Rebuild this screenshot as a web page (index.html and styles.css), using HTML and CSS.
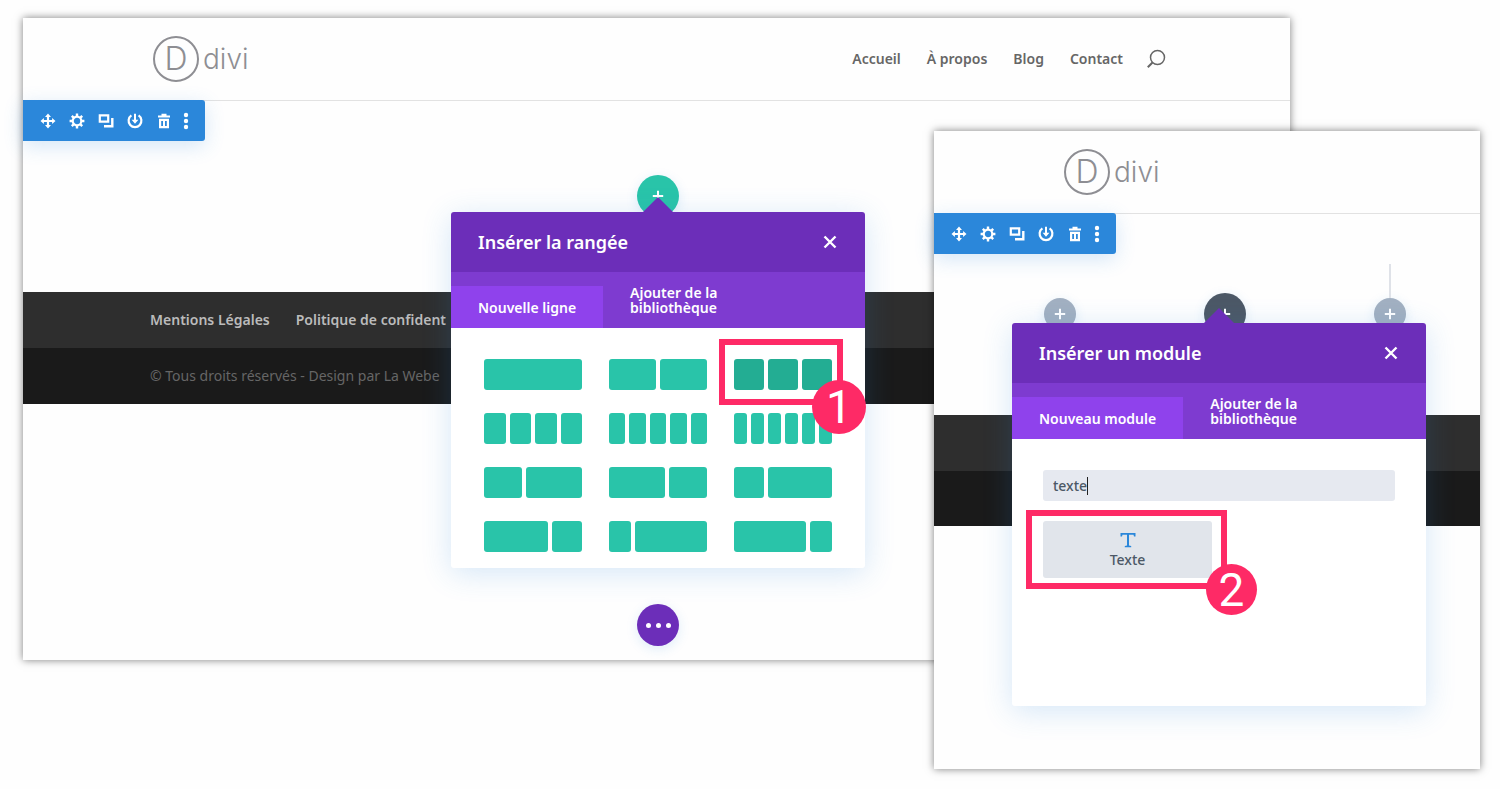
FILE: index.html
```
<!DOCTYPE html>
<html lang="fr">
<head>
<meta charset="utf-8">
<title>Divi – Insérer une rangée et un module</title>
<link rel="stylesheet" href="styles.css">
</head>
<body>
<svg class="sprite" aria-hidden="true">
  <symbol id="i-move" viewBox="0 0 16 16"><path d="M8 .5l3 3.400H9.100v3h3V5L15.500 8l-3.400 3V9.100h-3v3H11L8 15.500l-3-3.400h1.900v-3h-3V11L.5 8l3.400-3v1.900h3v-3H5z" fill="currentColor"/></symbol>
  <symbol id="i-gear" viewBox="0 0 16 16"><circle cx="8" cy="8" r="4.300" fill="none" stroke="currentColor" stroke-width="2.200"/><path d="M8 .6v3M8 12.400v3M.6 8h3M12.400 8h3M2.800 2.800l2 2M11.200 11.200l2 2M2.800 13.200l2-2M11.200 4.800l2-2" stroke="currentColor" stroke-width="2.400" fill="none"/></symbol>
  <symbol id="i-copy" viewBox="0 0 16 16"><path d="M1.800 2.300h8.400v6.400H1.800z" fill="none" stroke="currentColor" stroke-width="2.200"/><path d="M14.300 5v8.300H6" fill="none" stroke="currentColor" stroke-width="2.400"/></symbol>
  <symbol id="i-power" viewBox="0 0 16 16"><path d="M4.400 2.400a6.400 6.400 0 1 0 7.200 0" fill="none" stroke="currentColor" stroke-width="2.200"/><path d="M7 .8h2v6h2.400L8 10.800 4.600 6.800H7z" fill="currentColor"/></symbol>
  <symbol id="i-trash" viewBox="0 0 16 16"><path d="M5.500 .8h5v1.700H14v2H2v-2h3.500zM3 5.800h10v9.400H3zM5.200 8v5h1.800V8zM9 8v5h1.800V8z" fill="currentColor" fill-rule="evenodd"/></symbol>
  <symbol id="i-more" viewBox="0 0 6 18"><circle cx="3" cy="3" r="2.200" fill="currentColor"/><circle cx="3" cy="9" r="2.200" fill="currentColor"/><circle cx="3" cy="15" r="2.200" fill="currentColor"/></symbol>
  <symbol id="i-plus" viewBox="0 0 12 12"><path d="M6 .8v10.400M.8 6h10.400" stroke="currentColor" stroke-width="2" fill="none"/></symbol>
  <symbol id="i-close" viewBox="0 0 14 14"><path d="M1.500 1.500l11 11M12.500 1.500l-11 11" stroke="currentColor" stroke-width="2.400" fill="none"/></symbol>
  <symbol id="i-search" viewBox="0 0 20 20"><circle cx="11.500" cy="8.500" r="7" fill="none" stroke="currentColor" stroke-width="1.500"/><path d="M6.500 13.500L1.800 18.200" stroke="currentColor" stroke-width="2" fill="none"/></symbol>
  <symbol id="i-text" viewBox="0 0 16 16"><path d="M.5 1h15v3.500h-1.500L13.500 2.800H9v10.700l2.200.6v1.100H4.800v-1.100l2.200-.6V2.800H2.500L2 4.500H.5z" fill="currentColor"/></symbol>
</svg>

<main class="stage">
  <section class="window window-row">
    <header class="site-header">
      <a class="logo" href="#"><span class="logo-mark">D</span><span class="logo-name">divi</span></a>
      <nav class="site-nav">
        <a href="#">Accueil</a>
        <a href="#">À propos</a>
        <a href="#">Blog</a>
        <a href="#">Contact</a>
        <button class="search" aria-label="Rechercher"><svg><use href="#i-search"/></svg></button>
      </nav>
    </header>
    <div class="toolbar">
      <button aria-label="Déplacer"><svg><use href="#i-move"/></svg></button>
      <button aria-label="Réglages"><svg><use href="#i-gear"/></svg></button>
      <button aria-label="Dupliquer"><svg><use href="#i-copy"/></svg></button>
      <button aria-label="Enregistrer"><svg><use href="#i-power"/></svg></button>
      <button aria-label="Supprimer"><svg><use href="#i-trash"/></svg></button>
      <button class="more" aria-label="Plus"><svg><use href="#i-more"/></svg></button>
    </div>
    <div class="add-row">
      <button class="round green" aria-label="Ajouter une rangée"><svg><use href="#i-plus"/></svg></button>
    </div>
    <footer>
      <div class="foot-nav"><a href="#">Mentions Légales</a><a href="#">Politique de confident</a></div>
      <div class="foot-info">© Tous droits réservés - Design par La Webe</div>
    </footer>
    <div class="page-actions">
      <button class="round purple" aria-label="Options de la page"><i></i><i></i><i></i></button>
    </div>

    <div class="modal">
      <div class="modal-head"><h2>Insérer la rangée</h2><button aria-label="Fermer"><svg><use href="#i-close"/></svg></button></div>
      <div class="tabs">
        <button class="tab active">Nouvelle ligne</button>
        <button class="tab">Ajouter de la<br>bibliothèque</button>
      </div>
      <div class="layouts">
        <button class="layout" aria-label="1 colonne"><i></i></button>
        <button class="layout" aria-label="2 colonnes"><i></i><i></i></button>
        <button class="layout chosen" aria-label="3 colonnes"><i></i><i></i><i></i></button>
        <button class="layout" aria-label="4 colonnes"><i></i><i></i><i></i><i></i></button>
        <button class="layout" aria-label="5 colonnes"><i></i><i></i><i></i><i></i><i></i></button>
        <button class="layout" aria-label="6 colonnes"><i></i><i></i><i></i><i></i><i></i><i></i></button>
        <button class="layout two-three" aria-label="2/5 et 3/5"><i></i><i></i></button>
        <button class="layout three-two" aria-label="3/5 et 2/5"><i></i><i></i></button>
        <button class="layout one-two" aria-label="1/3 et 2/3"><i></i><i></i></button>
        <button class="layout two-one" aria-label="2/3 et 1/3"><i></i><i></i></button>
        <button class="layout one-three" aria-label="1/4 et 3/4"><i></i><i></i></button>
        <button class="layout three-one" aria-label="3/4 et 1/4"><i></i><i></i></button>
      </div>
      <div class="marker marker-one"><span class="step">1</span></div>
    </div>
  </section>

  <section class="window window-module">
    <header class="site-header">
      <a class="logo" href="#"><span class="logo-mark">D</span><span class="logo-name">divi</span></a>
    </header>
    <div class="toolbar">
      <button aria-label="Déplacer"><svg><use href="#i-move"/></svg></button>
      <button aria-label="Réglages"><svg><use href="#i-gear"/></svg></button>
      <button aria-label="Dupliquer"><svg><use href="#i-copy"/></svg></button>
      <button aria-label="Enregistrer"><svg><use href="#i-power"/></svg></button>
      <button aria-label="Supprimer"><svg><use href="#i-trash"/></svg></button>
      <button class="more" aria-label="Plus"><svg><use href="#i-more"/></svg></button>
    </div>
    <div class="add-modules">
      <button class="round small" aria-label="Ajouter un module, colonne 1"><svg><use href="#i-plus"/></svg></button>
      <button class="round dark" aria-label="Ajouter un module, colonne 2"><svg><use href="#i-plus"/></svg></button>
      <button class="round small linked" aria-label="Ajouter un module, colonne 3"><svg><use href="#i-plus"/></svg></button>
    </div>
    <footer>
      <div class="foot-nav"></div>
      <div class="foot-info"></div>
    </footer>

    <div class="modal">
      <div class="modal-head"><h2>Insérer un module</h2><button aria-label="Fermer"><svg><use href="#i-close"/></svg></button></div>
      <div class="tabs">
        <button class="tab active">Nouveau module</button>
        <button class="tab">Ajouter de la<br>bibliothèque</button>
      </div>
      <div class="modules">
        <div class="field"><input type="text" value="texte" size="5" aria-label="Rechercher un module"><span class="caret"></span></div>
        <button class="module"><svg><use href="#i-text"/></svg>Texte</button>
      </div>
      <div class="marker marker-two"><span class="step">2</span></div>
    </div>
  </section>
</main>
</body>
</html>
```

FILE: styles.css
```
* { box-sizing: border-box; }
body {
  margin: 0;
  background: #fefefe;
  font: 600 14px/20px "Noto Sans", "Open Sans", sans-serif;
  color: #666;
}
a { color: inherit; text-decoration: none; }
button { margin: 0; padding: 0; border: 0; background: none; font: inherit; color: inherit; }
svg { display: block; }
.sprite { position: absolute; width: 0; height: 0; }

.stage { position: relative; padding: 18px 210px 20px 23px; min-height: 100vh; }
.window { position: relative; background: #fefefe; box-shadow: 0 0 8px rgba(0, 0, 0, .5); }
.window-module { position: absolute; top: 131px; right: 20px; width: 546px; padding-bottom: 243px; }

.site-header {
  display: flex;
  align-items: center;
  justify-content: space-between;
  height: 83px;
  padding: 0 124px 0 130px;
  border-bottom: 1px solid #e2e2e2;
}
.logo { display: flex; align-items: center; gap: 4px; color: #8e8e93; font-family: Inter, sans-serif; font-weight: 300; }
.logo-mark {
  display: grid;
  place-items: center;
  width: 46px;
  height: 46px;
  border: 2px solid #8e8e93;
  border-radius: 50%;
  font-size: 32px;
  line-height: 40px;
}
.logo-name { font-size: 28px; line-height: 40px; }
.site-nav { display: flex; align-items: center; gap: 26px; }
.search { margin-left: -3px; }
.search svg { width: 20px; height: 20px; }

.toolbar {
  position: relative;
  display: flex;
  align-items: center;
  gap: 13px;
  width: max-content;
  height: 41px;
  margin-top: -1px;
  padding: 0 16px 0 17px;
  border-radius: 0 3px 3px 0;
  background: #2b87da;
  box-shadow: 0 5px 20px rgba(43, 135, 218, .2);
  color: #fff;
}
.toolbar svg { width: 16px; height: 16px; }
.toolbar .more { margin-left: -2px; }
.toolbar .more svg { width: 6px; height: 18px; }

.round {
  display: flex;
  align-items: center;
  justify-content: center;
  gap: 5px;
  width: 42px;
  height: 42px;
  border-radius: 50%;
  color: #fff;
  box-shadow: 0 3px 12px rgba(43, 135, 218, .15);
}
.round svg { width: 12px; height: 12px; }
.round i { width: 5px; height: 5px; border-radius: 50%; background: #fff; }
.green { background: #29c4a9; }
.purple { background: #6c2eb9; }
.dark { background: #4c5866; }
.small { position: relative; width: 32px; height: 32px; background: #a2b0c1; }
.linked::before { content: ""; position: absolute; bottom: 32px; left: 15px; width: 2px; height: 34px; background: #dfe2e8; }

.add-row { display: flex; justify-content: center; padding: 34px 0 75px 3px; }
.add-modules { display: flex; align-items: center; justify-content: space-between; padding: 39px 74px 80px 110px; }
.page-actions { display: flex; justify-content: center; padding: 200px 0 14px 3px; }

.foot-nav { display: flex; align-items: center; gap: 26px; height: 56px; padding: 0 127px; background: #2e2e2e; color: #bbb; }
.foot-info { display: flex; align-items: center; height: 56px; padding: 0 127px; background: #1a1a1a; color: #666; font-weight: 400; }
.window-module .foot-info { height: 55px; }

.modal {
  position: absolute;
  width: 414px;
  border-radius: 3px;
  background: #fff;
  box-shadow: 0 5px 30px rgba(43, 135, 218, .2);
  color: #fff;
}
.window-row .modal { top: 194px; left: 428px; }
.window-module .modal { top: 192px; left: 78px; }
.modal::before {
  content: "";
  position: absolute;
  bottom: 100%;
  left: 192px;
  border: 15px solid transparent;
  border-top: 0;
  border-bottom-color: #6c2eb9;
}
.modal-head {
  display: flex;
  align-items: center;
  justify-content: space-between;
  height: 60px;
  padding: 0 28px 0 27px;
  border-radius: 3px 3px 0 0;
  background: #6c2eb9;
}
.modal-head h2 { margin: 0; font-size: 18px; line-height: 24px; font-weight: 600; }
.modal-head svg { width: 14px; height: 14px; }
.tabs { display: flex; align-items: flex-end; height: 56px; background: #7e3bd0; }
.tab { height: 42px; padding: 0 27px; line-height: 15px; text-align: left; }
.tab:not(.active) { height: 56px; }
.active { background: #8f42ec; }

.layouts { display: grid; grid-template-columns: repeat(3, 1fr); gap: 23px 27px; padding: 31px 33px 16px; }
.layout { display: grid; grid-auto-flow: column; grid-auto-columns: 1fr; gap: 4px; height: 31px; }
.layout i { height: 31px; border-radius: 3px; background: #29c4a9; }
.chosen i { background: #23ad93; }
.two-three { grid-template-columns: 2fr 3fr; }
.three-two { grid-template-columns: 3fr 2fr; }
.one-two { grid-template-columns: 8fr 17fr; }
.two-one { grid-template-columns: 17fr 8fr; }
.one-three { grid-template-columns: 3fr 10fr; }
.three-one { grid-template-columns: 10fr 3fr; }

.modules { padding: 31px 31px 128px; color: #4c5866; }
.field { display: flex; align-items: center; height: 31px; padding: 0 10px; border-radius: 3px; background: #e6e9f0; }
.field input { field-sizing: content; padding: 0; border: 0; outline: 0; background: none; font: inherit; font-weight: 500; line-height: 20px; color: inherit; }
.caret { width: 1px; height: 18px; background: #222; }
.module {
  display: flex;
  flex-direction: column;
  align-items: center;
  justify-content: center;
  gap: 2px;
  width: 169px;
  height: 57px;
  margin-top: 20px;
  padding-top: 3px;
  border-radius: 3px;
  background: #e1e5eb;
  font-weight: 500;
}
.module svg { width: 16px; height: 16px; color: #2b87da; }

.marker { position: absolute; border: 6px solid #fe2a66; }
.marker-one { top: 127px; left: 268px; width: 124px; height: 66px; }
.marker-two { top: 187px; left: 14px; width: 201px; height: 79px; }
.step {
  position: absolute;
  display: grid;
  place-items: center;
  border-radius: 50%;
  background: #fe2a66;
  font: 400 46px/50px Roboto, "Liberation Sans", sans-serif;
}
.marker-one .step { right: -29px; bottom: -35px; width: 54px; height: 54px; }
.marker-two .step { right: -36px; bottom: -32px; width: 51px; height: 51px; }
```
